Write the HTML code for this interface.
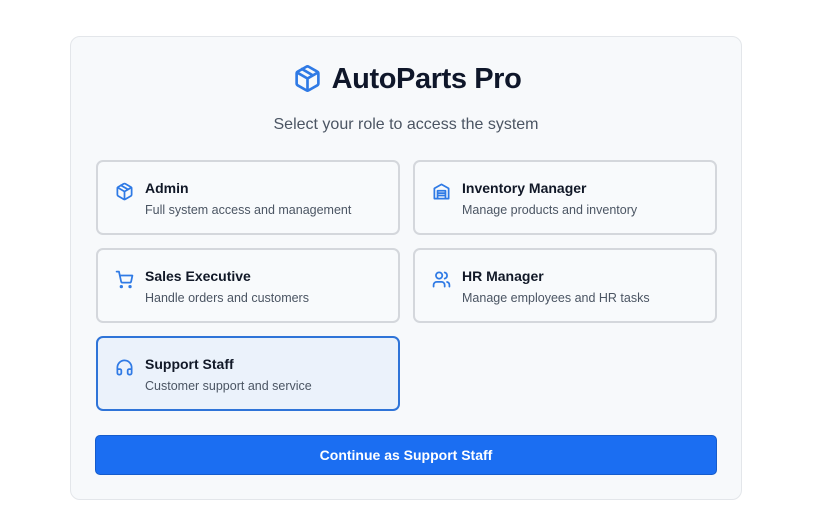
<!DOCTYPE html>
<html><head><style>
*{box-sizing:border-box;margin:0;padding:0}
body{width:839px;height:511px;background:#fff;font-family:"Liberation Sans",sans-serif;position:relative;overflow:hidden}
.wrap{position:absolute;left:70px;top:36px;width:672px;height:464px;background:#f7f9fb;border:1px solid #e3e6ea;border-radius:10px}
.title{position:absolute;left:0;right:0;top:26px;text-align:center;font-size:29px;font-weight:bold;color:#0f172a;letter-spacing:-0.4px;padding-left:2px}
.title svg{vertical-align:-5px;margin-right:10px}
.sub{position:absolute;left:0;right:0;top:79px;text-align:center;font-size:16px;color:#4b5563}
.card{position:absolute;width:304px;height:75px;border:2px solid #d4d7dc;border-radius:7px;background:#f8fafc}
.card.sel{border-color:#2f74d8;background:#ebf2fb}
.card svg{position:absolute;left:17px;top:20px}
.card b{position:absolute;left:47px;top:18px;font-size:14px;color:#111827}
.card span{position:absolute;left:47px;top:41px;font-size:12.5px;color:#4b5563}
.btn{position:absolute;left:24px;top:398px;width:622px;height:40px;background:#1b6ef2;border:1px solid #155ccc;border-radius:5px;color:#fff;font-size:14px;font-weight:bold;text-align:center;line-height:38px}
</style></head><body>
<div class="wrap">
<div class="title"><svg width="29" height="29" viewBox="0 0 24 24" fill="none" stroke="#2f7ae5" stroke-width="2.2" stroke-linecap="round" stroke-linejoin="round"><path d="M21 16V8a2 2 0 0 0-1-1.73l-7-4a2 2 0 0 0-2 0l-7 4A2 2 0 0 0 3 8v8a2 2 0 0 0 1 1.73l7 4a2 2 0 0 0 2 0l7-4A2 2 0 0 0 21 16z"/><path d="M3.3 7L12 12l8.7-5M12 22V12M7.5 4.2l9 5.2"/></svg>AutoParts Pro</div>
<div class="sub">Select your role to access the system</div>
<div class="card" style="left:25px;top:123px"><svg width="19" height="19" viewBox="0 0 24 24" fill="none" stroke="#2f7ae5" stroke-width="2.2" stroke-linecap="round" stroke-linejoin="round"><path d="M21 16V8a2 2 0 0 0-1-1.73l-7-4a2 2 0 0 0-2 0l-7 4A2 2 0 0 0 3 8v8a2 2 0 0 0 1 1.73l7 4a2 2 0 0 0 2 0l7-4A2 2 0 0 0 21 16z"/><path d="M3.3 7L12 12l8.7-5M12 22V12M7.5 4.2l9 5.2"/></svg><b>Admin</b><span>Full system access and management</span></div>
<div class="card" style="left:342px;top:123px"><svg width="19" height="19" viewBox="0 0 24 24" fill="none" stroke="#2f7ae5" stroke-width="2.2" stroke-linecap="round" stroke-linejoin="round"><path d="M3 21V8l9-5 9 5v13z"/><path d="M7 11h10M7 14h10M7 17h10M7 11v10M17 11v10"/></svg><b>Inventory Manager</b><span>Manage products and inventory</span></div>
<div class="card" style="left:25px;top:211px"><svg width="19" height="19" viewBox="0 0 24 24" fill="none" stroke="#2f7ae5" stroke-width="2.2" stroke-linecap="round" stroke-linejoin="round"><circle cx="8" cy="21" r="1"/><circle cx="19" cy="21" r="1"/><path d="M2 2h3l2.7 12.4a2 2 0 0 0 2 1.6h8.7a2 2 0 0 0 2-1.6L22 7H6"/></svg><b>Sales Executive</b><span>Handle orders and customers</span></div>
<div class="card" style="left:342px;top:211px"><svg width="19" height="19" viewBox="0 0 24 24" fill="none" stroke="#2f7ae5" stroke-width="2.2" stroke-linecap="round" stroke-linejoin="round"><path d="M16 21v-2a4 4 0 0 0-4-4H6a4 4 0 0 0-4 4v2"/><circle cx="9" cy="7" r="4"/><path d="M22 21v-2a4 4 0 0 0-3-3.87M16 3.13a4 4 0 0 1 0 7.75"/></svg><b>HR Manager</b><span>Manage employees and HR tasks</span></div>
<div class="card sel" style="left:25px;top:299px"><svg width="19" height="19" viewBox="0 0 24 24" fill="none" stroke="#2f7ae5" stroke-width="2.2" stroke-linecap="round" stroke-linejoin="round"><path d="M3 14h3a2 2 0 0 1 2 2v3a2 2 0 0 1-2 2H5a2 2 0 0 1-2-2v-7a9 9 0 0 1 18 0v7a2 2 0 0 1-2 2h-1a2 2 0 0 1-2-2v-3a2 2 0 0 1 2-2h3"/></svg><b>Support Staff</b><span>Customer support and service</span></div>
<div class="btn">Continue as Support Staff</div>
</div>
</body></html>
